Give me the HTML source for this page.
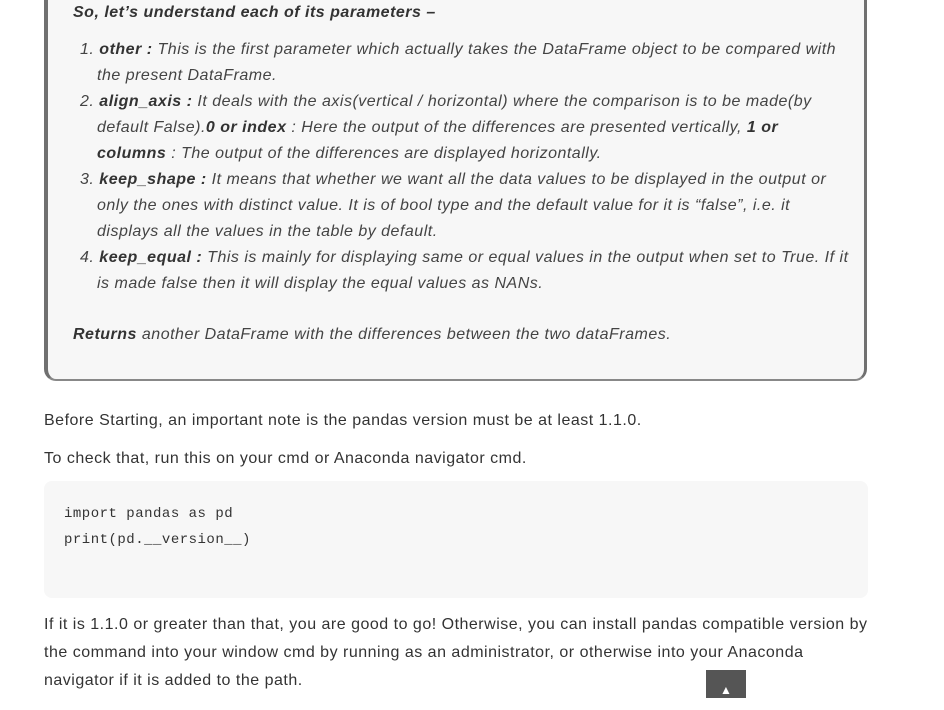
<!DOCTYPE html>
<html><head><meta charset="utf-8"><style>
body{margin:0;width:944px;height:698px;background:#fff;position:relative;overflow:hidden;font-family:"Liberation Sans",sans-serif;}
.box{position:absolute;left:44px;top:-20px;width:816px;height:399px;background:#f7f7f7;border-left:4px solid #707070;border-right:3px solid #707070;border-bottom:2px solid #888;border-radius:0 0 12px 12px;}
.l{position:absolute;white-space:nowrap;font-size:16px;}
.i{font-style:italic;color:#444;letter-spacing:0.5px;}
.n{color:#333;letter-spacing:0.5px;}
b{color:#333;}
.code{position:absolute;left:44px;top:481px;width:824px;height:117px;background:#f7f7f7;border-radius:8px;}
.m{position:absolute;font-family:"Liberation Mono",monospace;font-size:14px;color:#333;white-space:nowrap;letter-spacing:0.5px;}
.top{position:absolute;left:706px;top:670px;width:40px;height:28px;background:#555;color:#fff;text-align:center;font-size:12px;line-height:40px;}
</style></head><body>
<div class="box"></div>
<div class="l i" style="left:73px;top:4px"><b>So, let’s understand each of its parameters –</b></div>
<div class="l i" style="left:80px;top:41px">1. <b>other :</b> This is the first parameter which actually takes the DataFrame object to be compared with</div>
<div class="l i" style="left:97px;top:67px">the present DataFrame.</div>
<div class="l i" style="left:80px;top:93px">2. <b>align_axis :</b> It deals with the axis(vertical / horizontal) where the comparison is to be made(by</div>
<div class="l i" style="left:97px;top:119px">default False).<b>0 or index</b> : Here the output of the differences are presented vertically, <b>1 or</b></div>
<div class="l i" style="left:97px;top:145px"><b>columns</b> : The output of the differences are displayed horizontally.</div>
<div class="l i" style="left:80px;top:171px">3. <b>keep_shape :</b> It means that whether we want all the data values to be displayed in the output or</div>
<div class="l i" style="left:97px;top:197px">only the ones with distinct value. It is of bool type and the default value for it is “false”, i.e. it</div>
<div class="l i" style="left:97px;top:223px">displays all the values in the table by default.</div>
<div class="l i" style="left:80px;top:249px">4. <b>keep_equal :</b> This is mainly for displaying same or equal values in the output when set to True. If it</div>
<div class="l i" style="left:97px;top:275px">is made false then it will display the equal values as NANs.</div>
<div class="l i" style="left:73px;top:326px"><b>Returns</b> another DataFrame with the differences between the two dataFrames.</div>
<div class="l n" style="left:44px;top:412px">Before Starting, an important note is the pandas version must be at least 1.1.0.</div>
<div class="l n" style="left:44px;top:450px">To check that, run this on your cmd or Anaconda navigator cmd.</div>
<div class="code"></div>
<div class="m" style="left:64px;top:506px">import pandas as pd</div>
<div class="m" style="left:64px;top:532px">print(pd.__version__)</div>
<div class="l n" style="left:44px;top:616px">If it is 1.1.0 or greater than that, you are good to go! Otherwise, you can install pandas compatible version by</div>
<div class="l n" style="left:44px;top:644px">the command into your window cmd by running as an administrator, or otherwise into your Anaconda</div>
<div class="l n" style="left:44px;top:672px">navigator if it is added to the path.</div>
<div class="top">▲</div>
</body></html>
